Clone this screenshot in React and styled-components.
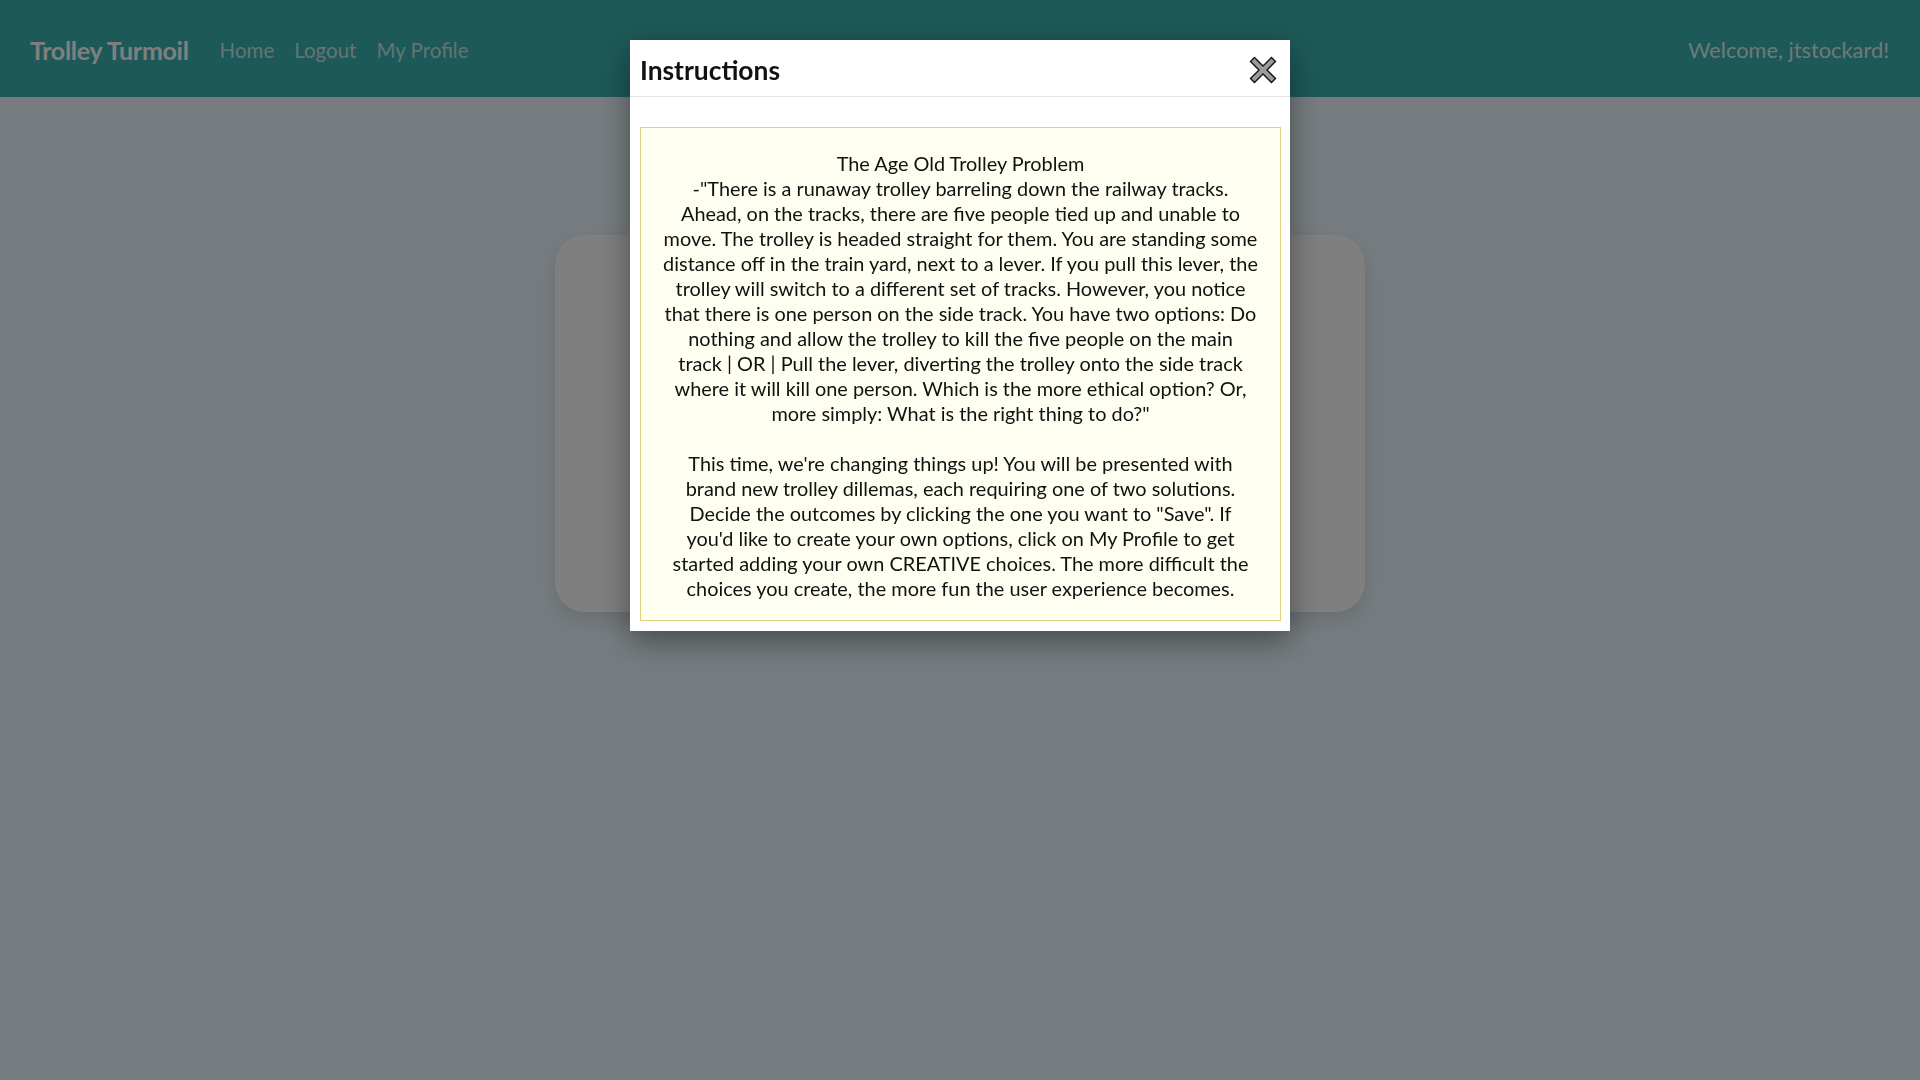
import React from "react";
import styled, { createGlobalStyle } from "styled-components";

const GlobalStyle = createGlobalStyle`
  html, body { margin: 0; padding: 0; }
  body {
    font-family: "Lato", "Open Sans", sans-serif;
    background: #ecf8fe;
  }
`;

const Page = styled.div`
  min-height: 100vh;
  background: #ecf8fe;
`;

const NavBar = styled.header`
  height: 97px;
  box-sizing: border-box;
  background: #3ab2b0;
  display: flex;
  align-items: center;
  padding: 2px 31px 0 30px;
  gap: 31px;
`;

const Brand = styled.a`
  font-family: "Lato", sans-serif;
  font-size: 25px;
  font-weight: 700;
  color: #ffffff;
  text-decoration: none;
  letter-spacing: -0.3px;
`;

const NavLinks = styled.nav`
  display: flex;
  align-items: center;
  gap: 20px;
  flex: 1;
`;

const NavLink = styled.a`
  font-family: "Lato", sans-serif;
  font-size: 20.5px;
  color: rgba(255, 255, 255, 0.72);
  text-decoration: none;
`;

const Welcome = styled.span`
  font-family: "Lato", sans-serif;
  font-size: 21.8px;
  color: rgba(255, 255, 255, 0.85);
`;

const Main = styled.main`
  display: flex;
  justify-content: center;
  padding-top: 138px;
`;

const GameCard = styled.section`
  width: 810px;
  height: 377px;
  background: #ffffff;
  border-radius: 30px;
  box-shadow: 0 8px 20px rgba(0, 0, 0, 0.12);
`;

const Overlay = styled.div`
  position: fixed;
  inset: 0;
  background: rgba(0, 0, 0, 0.5);
  display: flex;
  justify-content: center;
  align-items: flex-start;
  padding-top: 40px;
`;

const Modal = styled.div`
  width: 660px;
  background: #ffffff;
  box-shadow: 0 10px 30px rgba(0, 0, 0, 0.4);
`;

const ModalHeader = styled.div`
  height: 57px;
  box-sizing: border-box;
  border-bottom: 1px solid #e5e5e5;
  display: flex;
  align-items: center;
  justify-content: space-between;
  padding: 3px 12px 0 10px;
`;

const ModalTitle = styled.h2`
  margin: 0;
  font-family: "Lato", sans-serif;
  font-weight: 700;
  font-size: 26.4px;
  color: #111;
`;

const CloseButton = styled.button`
  border: none;
  background: none;
  padding: 0;
  width: 30px;
  height: 30px;
  display: flex;
  align-items: center;
  justify-content: center;
  cursor: pointer;
`;

const ModalBody = styled.div`
  padding: 30px 9px 10px 10px;
`;

const InfoBox = styled.div`
  background: #fffff1;
  border: 1px solid #e1d07e;
  padding: 23px 6px 19px;
  text-align: center;
  font-family: "Lato", sans-serif;
  font-size: 19.9px;
  line-height: 25px;
  color: #111;
`;

const Paragraph = styled.p`
  margin: 0;
`;

const Spacer = styled.div`
  height: 25px;
`;

function CloseIcon() {
  return (
    <svg width="30" height="30" viewBox="0 0 30 30">
      <polygon
        points="2.5,6.5 6.5,2.5 15,11 23.5,2.5 27.5,6.5 19,15 27.5,23.5 23.5,27.5 15,19 6.5,27.5 2.5,23.5 11,15"
        fill="#9b9b9b"
        stroke="#111"
        strokeWidth="1.4"
        strokeLinejoin="miter"
      />
    </svg>
  );
}

export default function App() {
  return (
    <>
      <GlobalStyle />
      <Page>
        <NavBar>
          <Brand href="#">Trolley Turmoil</Brand>
          <NavLinks>
            <NavLink href="#">Home</NavLink>
            <NavLink href="#">Logout</NavLink>
            <NavLink href="#">My Profile</NavLink>
          </NavLinks>
          <Welcome>Welcome, jtstockard!</Welcome>
        </NavBar>
        <Main>
          <GameCard />
        </Main>
      </Page>
      <Overlay>
        <Modal>
          <ModalHeader>
            <ModalTitle>Instructions</ModalTitle>
            <CloseButton aria-label="Close">
              <CloseIcon />
            </CloseButton>
          </ModalHeader>
          <ModalBody>
            <InfoBox>
              <Paragraph>
                The Age Old Trolley Problem
                <br />
                -"There is a runaway trolley barreling down the railway tracks.
                <br />
                Ahead, on the tracks, there are five people tied up and unable to
                <br />
                move. The trolley is headed straight for them. You are standing some
                <br />
                distance off in the train yard, next to a lever. If you pull this lever, the
                <br />
                trolley will switch to a different set of tracks. However, you notice
                <br />
                that there is one person on the side track. You have two options: Do
                <br />
                nothing and allow the trolley to kill the five people on the main
                <br />
                track | OR | Pull the lever, diverting the trolley onto the side track
                <br />
                where it will kill one person. Which is the more ethical option? Or,
                <br />
                more simply: What is the right thing to do?"
              </Paragraph>
              <Spacer />
              <Paragraph>
                This time, we're changing things up! You will be presented with
                <br />
                brand new trolley dillemas, each requiring one of two solutions.
                <br />
                Decide the outcomes by clicking the one you want to "Save". If
                <br />
                you'd like to create your own options, click on My Profile to get
                <br />
                started adding your own CREATIVE choices. The more difficult the
                <br />
                choices you create, the more fun the user experience becomes.
              </Paragraph>
            </InfoBox>
          </ModalBody>
        </Modal>
      </Overlay>
    </>
  );
}
